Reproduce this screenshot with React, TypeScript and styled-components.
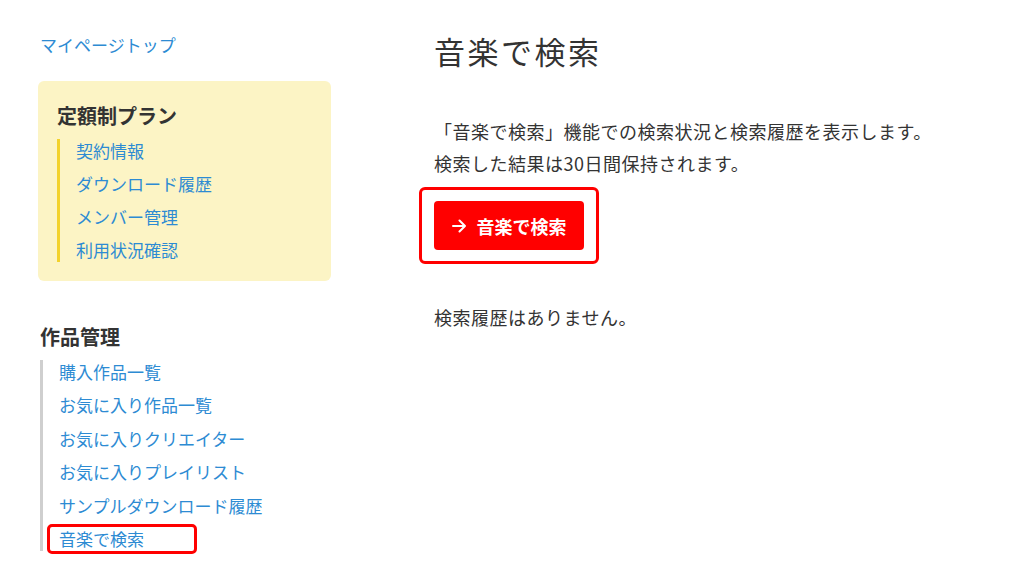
import React from "react";
import styled, { createGlobalStyle } from "styled-components";

const GlobalStyle = createGlobalStyle`
  body {
    margin: 0;
    background: #ffffff;
    font-family: "Noto Sans CJK JP", "Noto Sans", sans-serif;
    color: #333333;
  }
`;

const planLinks = ["契約情報", "ダウンロード履歴", "メンバー管理", "利用状況確認"];
const workLinks = [
  "購入作品一覧",
  "お気に入り作品一覧",
  "お気に入りクリエイター",
  "お気に入りプレイリスト",
  "サンプルダウンロード履歴",
  "音楽で検索",
];

export default function App() {
  return (
    <>
      <GlobalStyle />
      <Page>
        <Sidebar>
          <TopLink href="#">マイページトップ</TopLink>

          <PlanBox>
            <SectionTitle>定額制プラン</SectionTitle>
            <NavList $bar="#f3d22c" $gap={9}>
              {planLinks.map((label) => (
                <NavItem key={label}>
                  <NavLink href="#">{label}</NavLink>
                </NavItem>
              ))}
            </NavList>
          </PlanBox>

          <WorksSection>
            <SectionTitle>作品管理</SectionTitle>
            <NavList $bar="#cfcfcf" $gap={9.4}>
              {workLinks.map((label) => (
                <NavItem key={label}>
                  <NavLink href="#">{label}</NavLink>
                  {label === "音楽で検索" && <Highlight />}
                </NavItem>
              ))}
            </NavList>
          </WorksSection>
        </Sidebar>

        <Main>
          <Heading>音楽で検索</Heading>
          <Lead>
            「音楽で検索」機能での検索状況と検索履歴を表示します。
            <br />
            検索した結果は30日間保持されます。
          </Lead>
          <ButtonFrame>
            <SearchButton type="button">
              <svg width="14" height="14" viewBox="0 0 14 14" fill="none">
                <path
                  d="M1 7h12M7.5 1.5 13 7l-5.5 5.5"
                  stroke="#ffffff"
                  strokeWidth="2"
                  strokeLinecap="round"
                  strokeLinejoin="round"
                />
              </svg>
              音楽で検索
            </SearchButton>
          </ButtonFrame>
          <Empty>検索履歴はありません。</Empty>
        </Main>
      </Page>
    </>
  );
}

const Page = styled.div`
  display: grid;
  grid-template-columns: 293px 1fr;
  column-gap: 103px;
  padding: 32px 0 0 38px;
  min-height: 587px;
  box-sizing: border-box;
`;

const Sidebar = styled.aside`
  display: flex;
  flex-direction: column;
`;

const TopLink = styled.a`
  font-size: 17px;
  line-height: 26px;
  color: #2d8bd3;
  text-decoration: none;
  padding-left: 2px;
`;

const PlanBox = styled.div`
  margin-top: 23px;
  background: #fcf4c5;
  border-radius: 6px;
  padding: 20px 19px 19px;
`;

const WorksSection = styled.div`
  margin-top: 41px;
  padding-left: 2px;
`;

const SectionTitle = styled.h3`
  margin: 0 0 8px;
  font-size: 20px;
  line-height: 30px;
  font-weight: 700;
  color: #333333;
`;

const NavList = styled.ul<{ $bar: string; $gap: number }>`
  list-style: none;
  margin: 0;
  padding: 0 0 0 16px;
  border-left: 3px solid ${(p) => p.$bar};
  display: flex;
  flex-direction: column;
  gap: ${(p) => p.$gap}px;
`;

const NavItem = styled.li`
  position: relative;
  line-height: 24px;
`;

const NavLink = styled.a`
  font-size: 17px;
  color: #2d8bd3;
  text-decoration: none;
`;

const Highlight = styled.span`
  position: absolute;
  left: -12px;
  top: -3px;
  width: 150px;
  height: 30px;
  box-sizing: border-box;
  border: 3px solid #ff0000;
  border-radius: 5px;
  pointer-events: none;
`;

const Main = styled.main`
  display: flex;
  flex-direction: column;
  align-items: flex-start;
`;

const Heading = styled.h1`
  margin: -1px 0 0;
  font-size: 31px;
  line-height: 40px;
  font-weight: 400;
  letter-spacing: 2.5px;
  color: #333333;
`;

const Lead = styled.p`
  margin: 44px 0 0;
  font-size: 18px;
  line-height: 32px;
  letter-spacing: 0.5px;
  color: #333333;
`;

const ButtonFrame = styled.div`
  margin: 8px 0 0 -15px;
  padding: 11px 12px;
  border: 3px solid #ff0000;
  border-radius: 6px;
`;

const SearchButton = styled.button`
  width: 150px;
  height: 49px;
  display: flex;
  align-items: center;
  justify-content: center;
  gap: 11px;
  border: none;
  border-radius: 4px;
  background: #ff0000;
  color: #ffffff;
  font-family: "Noto Sans CJK JP", "Noto Sans", sans-serif;
  font-size: 18px;
  font-weight: 700;
  cursor: pointer;
`;

const Empty = styled.p`
  margin: 37px 0 0;
  font-size: 18px;
  line-height: 32px;
  letter-spacing: 0.5px;
  color: #333333;
`;
